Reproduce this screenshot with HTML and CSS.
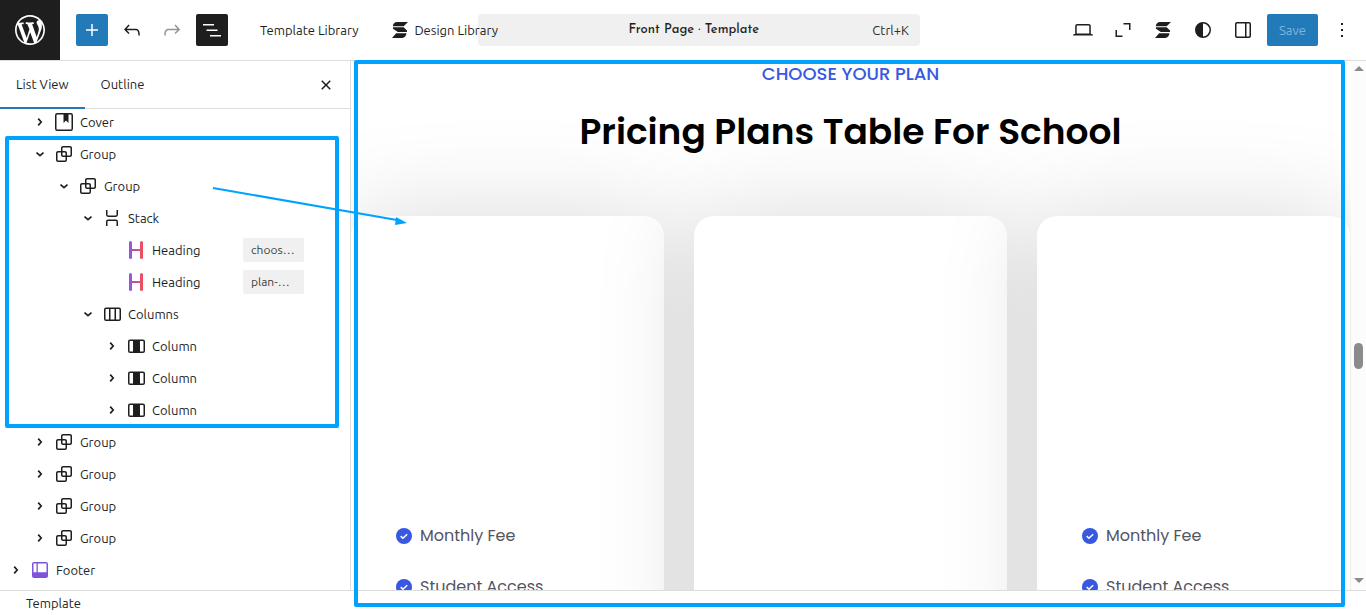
FILE: index.html
```html
<!DOCTYPE html>
<html lang="en">
<head>
<meta charset="utf-8">
<meta name="viewport" content="width=device-width, initial-scale=1">
<title>Front Page · Template</title>
<link rel="stylesheet" href="styles.css">
</head>
<body class="editor">
<svg class="sprite" aria-hidden="true">
  <defs><linearGradient id="heading-bar" gradientUnits="userSpaceOnUse" x1="6" y1="0" x2="18" y2="0"><stop offset="0" stop-color="#9657d5"/><stop offset="1" stop-color="#ef4d65"/></linearGradient></defs>
  <symbol id="group" viewBox="0 0 24 24"><path d="M18 4h-7c-1.1 0-2 .9-2 2v3H6c-1.1 0-2 .9-2 2v7c0 1.1.9 2 2 2h7c1.1 0 2-.9 2-2v-3h3c1.1 0 2-.9 2-2V6c0-1.1-.9-2-2-2zm-4.500 14c0 .3-.2.5-.5.5H6c-.3 0-.5-.2-.5-.5v-7c0-.3.2-.5.5-.5h3V13c0 1.100.9 2 2 2h2.500v3zm0-4.500H11c-.3 0-.5-.2-.5-.5v-2.500H13c.3 0 .5.2.5.5v2.500zm5-.5c0 .3-.2.5-.5.5h-3V11c0-1.100-.9-2-2-2h-2.500V6c0-.3.2-.5.5-.5h7c.3 0 .5.2.5.5v7z"/></symbol>
  <symbol id="cover" viewBox="0 0 24 24"><rect x="3.75" y="3.75" width="16.5" height="16.5" rx="1.5" fill="none" stroke="currentColor" stroke-width="1.5"/><path d="M11.5 4v9l2.5-2.6 2.5 2.6V4z"/></symbol>
  <symbol id="stack" viewBox="0 0 24 24"><path d="M6.75 4v4.800c0 .8.5 1.400 1.400 1.400h7.700c.9 0 1.400-.6 1.400-1.400V4M6.750 20v-4.400c0-.8.5-1.400 1.400-1.400h7.700c.9 0 1.400.6 1.400 1.400V20" fill="none" stroke="currentColor" stroke-width="1.5"/></symbol>
  <symbol id="heading" viewBox="0 0 24 24"><path d="M6 11h12v2H6z" fill="url(#heading-bar)"/><path d="M6.500 4.500v15" stroke="#9657d5" stroke-width="3" stroke-linecap="round"/><path d="M17.500 4.500v15" stroke="#ef4d65" stroke-width="3" stroke-linecap="round"/></symbol>
  <symbol id="columns" viewBox="0 0 24 24"><path d="M6 6.250h13q1.250 0 1.250 1.250v9.500q0 1.250-1.250 1.250H6q-1.250 0-1.250-1.250v-9.500q0-1.250 1.250-1.250zM9.750 6v12M15.250 6v12" fill="none" stroke="currentColor" stroke-width="1.500"/></symbol>
  <symbol id="column" viewBox="0 0 24 24"><rect x="4.75" y="6.25" width="15.500" height="12" rx="1.300" fill="none" stroke="currentColor" stroke-width="1.500"/><path d="M9 6h7v12H9z"/></symbol>
  <symbol id="footer" viewBox="0 0 24 24"><path fill-rule="evenodd" d="M6 4h12c1.100 0 2 .9 2 2v12c0 1.100-.9 2-2 2H6c-1.100 0-2-.9-2-2V6c0-1.100.9-2 2-2zm-.5 1.500v8.700h3V5.500zm4.300 0v8.700h8.700V5.500z"/></symbol>
  <symbol id="right" viewBox="0 0 24 24"><path d="m10.200 8.600 3 3.400-3 3.400" fill="none" stroke="currentColor" stroke-width="1.700"/></symbol>
  <symbol id="down" viewBox="0 0 24 24"><path d="m8.500 10.600 3.500 3 3.500-3" fill="none" stroke="currentColor" stroke-width="1.700"/></symbol>
  <symbol id="spectra" viewBox="0 0 24 24"><path d="M9 4h11l-4.300 4.200H4.800c.3-2.300 1.700-4.200 4.200-4.200zM5 9.300h10.600L19 12.500V14h-9.200L5 10.800zM8.200 15.300h10.300c-.2 2.600-1.900 4.500-4.300 4.700H4z"/></symbol>
  <symbol id="tick" viewBox="0 0 16 16"><circle cx="8" cy="8" r="8" fill="#3858e0"/><path d="m4.700 8.100 2.200 2.100 4.300-4" fill="none" stroke="#fff" stroke-width="1.500"/></symbol>
</svg>

<header class="topbar">
  <div class="topbar-left">
    <a class="site-logo" href="#" aria-label="View site"><svg viewBox="0 0 20 20"><path d="M20 10c0-5.510-4.490-10-10-10C4.480 0 0 4.490 0 10c0 5.520 4.480 10 10 10 5.510 0 10-4.480 10-10zM7.780 15.370L4.370 6.220c.55-.02 1.170-.08 1.170-.08.5-.06.44-1.130-.06-1.110 0 0-1.450.11-2.370.11-.18 0-.37 0-.58-.01C4.120 2.690 6.870 1.110 10 1.110c2.330 0 4.450.87 6.050 2.340-.68-.11-1.650.39-1.650 1.580 0 .74.45 1.360.9 2.100.35.61.55 1.360.55 2.460 0 1.490-1.400 5-1.400 5l-3.030-8.370c.54-.02.82-.17.82-.17.5-.05.44-1.250-.06-1.220 0 0-1.440.12-2.380.12-.87 0-2.330-.12-2.330-.12-.5-.03-.56 1.200-.06 1.220l.92.08 1.260 3.410zM17.410 10c.24-.64.74-1.870.43-4.250.7 1.290 1.050 2.710 1.050 4.250 0 3.290-1.730 6.240-4.400 7.780.97-2.590 1.940-5.200 2.920-7.780zM6.100 18.090C3.120 16.650 1.110 13.530 1.110 10c0-1.300.23-2.480.72-3.590C3.250 10.300 4.670 14.200 6.100 18.090zm4.030-6.630l2.580 6.980c-.86.29-1.760.45-2.710.45-.79 0-1.570-.11-2.290-.33.81-2.380 1.620-4.740 2.420-7.100z"/></svg></a>
    <div class="tools">
      <button class="tool tool-add" aria-label="Add block"><svg class="icon" viewBox="0 0 24 24"><path d="M11.250 12.750V18h1.500v-5.250H18v-1.500h-5.250V6h-1.500v5.250H6v1.500z"/></svg></button>
      <button class="tool" aria-label="Undo"><svg class="icon" viewBox="0 0 24 24"><path d="M18.300 11.700c-.6-.6-1.400-.9-2.300-.9H6.700l2.900-3.300-1.100-1-4.500 5L8.500 16l1-1-2.700-2.700H16c.5 0 .9.2 1.300.5 1 1 1 3.400 1 4.500v.3h1.500v-.2c0-1.500 0-4.300-1.500-5.700z"/></svg></button>
      <button class="tool tool-off" aria-label="Redo"><svg class="icon" viewBox="0 0 24 24"><path d="M15.600 6.500l-1.100 1 2.900 3.300H8c-.9 0-1.700.3-2.300.9-1.400 1.500-1.400 4.200-1.400 5.600v.2h1.500v-.3c0-1.100 0-3.500 1-4.500.3-.3.7-.5 1.300-.5h9.200L14.500 15l1.100 1.100 4.600-4.600-4.600-5z"/></svg></button>
      <button class="tool tool-on" aria-label="List View"><svg class="icon" viewBox="0 0 24 24"><path d="M3 6h11v1.500H3zM6.500 11.500h11V13h-11zM10 17h11v1.500H10z"/></svg></button>
    </div>
    <button class="library">Template Library</button>
    <button class="library library-design"><svg class="icon"><use href="#spectra"/></svg>Design Library</button>
  </div>
  <button class="command"><span class="command-title">Front Page · Template</span><span class="command-key">Ctrl+K</span></button>
  <div class="topbar-right">
    <button class="tool" aria-label="View"><svg class="icon" viewBox="0 0 24 24"><path d="M20.500 16h-.7V8c0-1.100-.9-2-2-2H6.200c-1.100 0-2 .9-2 2v8h-.7c-.8 0-1.500.7-1.500 1.500h20c0-.8-.7-1.500-1.500-1.500zM5.700 8c0-.3.2-.5.5-.5h11.600c.3 0 .5.2.5.5v7.600H5.700V8z"/></svg></button>
    <button class="tool" aria-label="Zoom out"><svg class="icon" viewBox="0 0 24 24"><path d="M12.500 5.750h6.250V12M5.250 12v6.250h6.250" fill="none" stroke="currentColor" stroke-width="1.500"/></svg></button>
    <button class="tool" aria-label="Spectra"><svg class="icon"><use href="#spectra"/></svg></button>
    <button class="tool" aria-label="Styles"><svg class="icon" viewBox="0 0 24 24"><path fill-rule="evenodd" d="M20 12a8 8 0 1 1-16 0 8 8 0 0 1 16 0zm-1.500 0a6.500 6.500 0 0 1-6.500 6.500v-13a6.500 6.500 0 0 1 6.500 6.500z"/></svg></button>
    <button class="tool" aria-label="Settings"><svg class="icon" viewBox="0 0 24 24"><path d="M18 4H6c-1.100 0-2 .9-2 2v12c0 1.100.9 2 2 2h12c1.100 0 2-.9 2-2V6c0-1.100-.9-2-2-2zm-4 14.500H6c-.3 0-.5-.2-.5-.5V6c0-.3.2-.5.5-.5h8v13zm4.500-.5c0 .3-.2.5-.5.5h-2.500v-13H18c.3 0 .5.2.5.5v12z"/></svg></button>
    <button class="save">Save</button>
    <button class="tool" aria-label="Options"><svg class="icon" viewBox="0 0 24 24"><path d="M11 5h2v2h-2zM11 11h2v2h-2zM11 17h2v2h-2z"/></svg></button>
  </div>
</header>

<div class="workspace">
  <aside class="sidebar">
    <div class="tabs" role="tablist">
      <button class="tab tab-active" role="tab" aria-selected="true">List View</button>
      <button class="tab" role="tab" aria-selected="false">Outline</button>
      <button class="tool close" aria-label="Close"><svg class="icon" viewBox="0 0 24 24"><path d="M12 13.060l3.712 3.713 1.061-1.060L13.061 12l3.712-3.712-1.060-1.060L12 10.938 8.288 7.227l-1.061 1.060L10.939 12l-3.712 3.712 1.060 1.061L12 13.061z"/></svg></button>
    </div>
    <div class="tree-scroll">
      <div class="tree">
        <button class="row level-1"><svg class="icon"><use href="#right"/></svg><svg class="icon"><use href="#cover"/></svg><span class="name">Cover</span></button>
        <div class="marked">
          <button class="row level-1"><svg class="icon"><use href="#down"/></svg><svg class="icon"><use href="#group"/></svg><span class="name">Group</span></button>
          <button class="row level-2"><svg class="icon"><use href="#down"/></svg><svg class="icon"><use href="#group"/></svg><span class="name">Group</span></button>
          <button class="row level-3"><svg class="icon"><use href="#down"/></svg><svg class="icon"><use href="#stack"/></svg><span class="name">Stack</span></button>
          <button class="row level-4"><span class="icon"></span><svg class="icon"><use href="#heading"/></svg><span class="name">Heading</span><span class="anchor">choos…</span></button>
          <button class="row level-4"><span class="icon"></span><svg class="icon"><use href="#heading"/></svg><span class="name">Heading</span><span class="anchor">plan-…</span></button>
          <button class="row level-3"><svg class="icon"><use href="#down"/></svg><svg class="icon"><use href="#columns"/></svg><span class="name">Columns</span></button>
          <button class="row level-4"><svg class="icon"><use href="#right"/></svg><svg class="icon"><use href="#column"/></svg><span class="name">Column</span></button>
          <button class="row level-4"><svg class="icon"><use href="#right"/></svg><svg class="icon"><use href="#column"/></svg><span class="name">Column</span></button>
          <button class="row level-4"><svg class="icon"><use href="#right"/></svg><svg class="icon"><use href="#column"/></svg><span class="name">Column</span></button>
        </div>
        <button class="row level-1"><svg class="icon"><use href="#right"/></svg><svg class="icon"><use href="#group"/></svg><span class="name">Group</span></button>
        <button class="row level-1"><svg class="icon"><use href="#right"/></svg><svg class="icon"><use href="#group"/></svg><span class="name">Group</span></button>
        <button class="row level-1"><svg class="icon"><use href="#right"/></svg><svg class="icon"><use href="#group"/></svg><span class="name">Group</span></button>
        <button class="row level-1"><svg class="icon"><use href="#right"/></svg><svg class="icon"><use href="#group"/></svg><span class="name">Group</span></button>
        <button class="row level-0"><svg class="icon"><use href="#right"/></svg><svg class="icon part"><use href="#footer"/></svg><span class="name">Footer</span></button>
      </div>
    </div>
  </aside>

  <main class="stage">
    <div class="canvas">
      <p class="eyebrow">CHOOSE YOUR PLAN</p>
      <h1 class="headline">Pricing Plans Table For School</h1>
      <div class="plans">
        <section class="plan">
          <ul class="features">
            <li class="feature"><svg class="tick"><use href="#tick"/></svg>Monthly Fee</li>
            <li class="feature"><svg class="tick"><use href="#tick"/></svg>Student Access</li>
          </ul>
        </section>
        <section class="plan"></section>
        <section class="plan">
          <ul class="features">
            <li class="feature"><svg class="tick"><use href="#tick"/></svg>Monthly Fee</li>
            <li class="feature"><svg class="tick"><use href="#tick"/></svg>Student Access</li>
          </ul>
        </section>
      </div>
    </div>
    <div class="scrollbar" aria-hidden="true">
      <span class="arrow-up"></span>
      <span class="thumb"></span>
      <span class="arrow-down"></span>
    </div>
    <div class="stage-mark"></div>
    <svg class="pointer" viewBox="0 0 196 42" aria-hidden="true"><path d="M1 6l184 32" stroke="#00a2ff" stroke-width="2"/><path d="M184 35l11 6-12 2z" fill="#00a2ff"/></svg>
  </main>
</div>

<footer class="breadcrumb">Template</footer>
</body>
</html>
```
FILE: styles.css
```css
* { box-sizing: border-box; }

.editor {
  margin: 0;
  height: 100vh;
  display: flex;
  flex-direction: column;
  overflow: hidden;
  background: #fff;
  color: #1e1e1e;
  font: 13px/20px Ubuntu, "Noto Sans", sans-serif;
}

button {
  border: 0;
  margin: 0;
  padding: 0;
  background: none;
  color: inherit;
  font: inherit;
}

.sprite { position: absolute; width: 0; height: 0; }

.icon {
  flex: none;
  width: 24px;
  height: 24px;
  fill: currentColor;
}

/* Top bar */
.topbar {
  flex: none;
  display: flex;
  align-items: center;
  border-bottom: 1px solid #ddd;
}

.topbar-left {
  position: relative;
  z-index: 1;
  flex: none;
  width: 35%;
  display: flex;
  align-items: center;
  white-space: nowrap;
}

.site-logo {
  flex: none;
  display: grid;
  place-items: center;
  width: 60px;
  height: 60px;
  background: #1e1e1e;
}

.site-logo svg { width: 30px; height: 30px; fill: #fff; }

.tools { display: flex; gap: 8px; margin: 0 32px 0 16px; }

.tool {
  flex: none;
  display: grid;
  place-items: center;
  width: 32px;
  height: 32px;
  border-radius: 2px;
}

.tool-add { background: #237ab9; color: #fff; }
.tool-off { color: #949494; }
.tool-on { background: #1e1e1e; color: #fff; }

.library { display: flex; align-items: center; }
.library-design { gap: 2px; margin-left: 30px; }

.command {
  flex: 1;
  display: flex;
  align-items: center;
  height: 32px;
  margin-right: 147px;
  padding: 0 11px;
  border-radius: 4px;
  background: #f0f0f0;
}

.command-title {
  flex: 1;
  padding-left: 26px;
  font: 500 13px/20px "Josefin Sans", Lato, sans-serif;
}

.command-key { color: #2f2f2f; }

.topbar-right { flex: none; display: flex; gap: 8px; padding-right: 8px; }

.save {
  padding: 0 12px;
  border-radius: 2px;
  background: #237ab9;
  color: #7db6dd;
}

/* List view */
.workspace { flex: 1; min-height: 0; display: flex; }

.sidebar {
  flex: none;
  display: flex;
  flex-direction: column;
  width: 351px;
  border-right: 1px solid #ddd;
}

.tabs {
  flex: none;
  display: flex;
  align-items: center;
  height: 48px;
  padding-right: 8px;
  border-bottom: 1px solid #ddd;
}

.tab { align-self: stretch; padding: 0 16px 1px; }
.tab-active { box-shadow: 0 1px #237ab9, inset 0 -1px #237ab9; }
.close { margin-left: auto; }

.tree-scroll { flex: 1; min-height: 0; overflow: hidden; }
.tree { margin-top: -3px; }

.row {
  display: flex;
  align-items: center;
  width: 100%;
  height: 32px;
  padding-right: 46px;
  text-align: left;
}

.level-0 { padding-left: 4px; }
.level-1 { padding-left: 28px; }
.level-2 { padding-left: 52px; }
.level-3 { padding-left: 76px; }
.level-4 { padding-left: 100px; }

.name { flex: 1; padding-left: 4px; }
.part { color: #7f54d9; }

.anchor {
  width: 61px;
  padding: 2px 8px;
  border-radius: 2px;
  background: #f0f0f0;
  color: #3c3c3c;
  font-size: 12px;
}

.marked { position: relative; }

.marked::after {
  content: "";
  position: absolute;
  inset: -2px 11px -2px 5px;
  border: 4px solid #00a2ff;
  border-radius: 2px;
  pointer-events: none;
}

/* Page preview */
.stage {
  position: relative;
  flex: 1;
  min-width: 0;
  display: flex;
}

.canvas {
  flex: 1;
  min-width: 0;
  overflow: hidden;
  padding-right: 1px;
  font-family: Poppins, Inter, sans-serif;
}

.eyebrow {
  margin: 0;
  color: #3858e0;
  font-size: 18px;
  font-weight: 500;
  line-height: 26px;
  text-align: center;
}

.headline {
  margin: 20px 0 60px;
  color: #000;
  font-size: 36px;
  font-weight: 600;
  line-height: 49px;
  text-align: center;
}

.plans {
  display: grid;
  grid-template-columns: repeat(3, 1fr);
  gap: 30px;
}

.plan {
  position: relative;
  height: 600px;
  padding: 294px 45px 0;
  border-radius: 20px;
  background: #fff;
  box-shadow: 0 0 100px rgba(0, 0, 0, .15);
}

.features { margin: 0; padding: 0; list-style: none; }

.feature {
  display: flex;
  align-items: center;
  gap: 8px;
  height: 51px;
  color: #54545f;
  font-size: 16px;
}

.tick { width: 16px; height: 16px; }

.scrollbar {
  flex: none;
  display: flex;
  flex-direction: column;
  align-items: center;
  width: 15px;
  padding: 5px 0 7px;
  background: #fcfcfc;
}

.arrow-up { border: 5px solid transparent; border-top: 0; border-bottom-color: #8b8b8b; }
.arrow-down { margin-top: auto; border: 5px solid transparent; border-bottom: 0; border-top-color: #8b8b8b; }
.thumb { width: 9px; height: 26px; margin-top: 272px; border-radius: 5px; background: #8b8b8b; }

/* Annotations */
.stage-mark {
  position: absolute;
  inset: -1px 21px -17px 3px;
  border: 4px solid #00a2ff;
  border-radius: 2px;
}

.pointer {
  position: absolute;
  left: -139px;
  top: 121px;
  width: 196px;
  height: 42px;
  overflow: visible;
}

.breadcrumb {
  flex: none;
  height: 25px;
  padding: 2px 26px;
  border-top: 1px solid #ddd;
}
```
